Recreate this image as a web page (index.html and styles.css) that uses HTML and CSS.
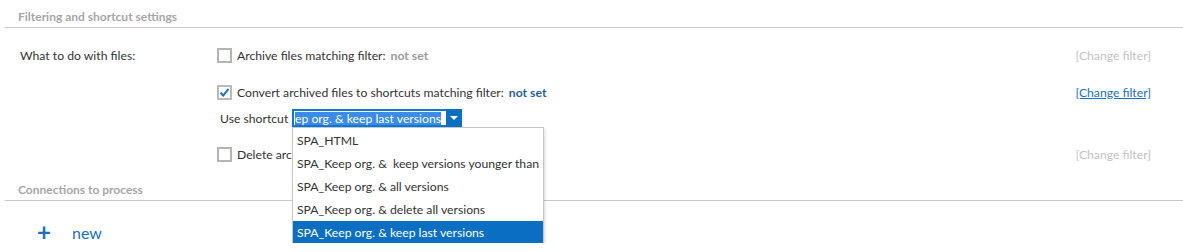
FILE: index.html
```html
<!DOCTYPE html>
<html lang="en">
<head>
    <meta charset="UTF-8">
    <title>Filtering and shortcut settings</title>
    <link rel="stylesheet" href="styles.css">
</head>
<body>
    <div class="section">
        <h3 class="section-title">Filtering and shortcut settings</h3>
        <div class="settings">
            <div class="row">
                <div class="row-label">What to do with files:</div>
                <div class="row-main">
                    <span class="checkbox"></span>
                    <span>Archive files matching filter:</span>
                    <span class="state">not set</span>
                </div>
                <a class="change disabled">[Change filter]</a>
            </div>
            <div class="row row-checked">
                <div class="row-label"></div>
                <div class="row-main">
                    <span class="checkbox checked">
                        <svg width="11" height="11" viewBox="0 0 11 11"><path d="M1.5 5.8 L4.2 8.5 L9.5 1.8" fill="none" stroke="#1b6fc2" stroke-width="2"/></svg>
                    </span>
                    <span>Convert archived files to shortcuts matching filter:</span>
                    <span class="state active">not set</span>
                </div>
                <a class="change" href="#">[Change filter]</a>
            </div>
            <div class="shortcut-row">
                <span class="shortcut-label">Use shortcut</span>
                <div class="combo">
                    <div class="combo-input"><span class="combo-text"><span class="typo">ep</span> org. &amp; keep last versions</span></div>
                    <div class="combo-arrow">
                        <svg width="8" height="4" viewBox="0 0 8 4"><path d="M0 0 H8 L4 4 Z" fill="#fff"/></svg>
                    </div>
                    <ul class="combo-list">
                        <li>SPA_HTML</li>
                        <li>SPA_Keep org. &amp;&nbsp; keep versions younger than</li>
                        <li>SPA_Keep org. &amp; all versions</li>
                        <li>SPA_Keep org. &amp; delete all versions</li>
                        <li class="selected">SPA_Keep org. &amp; keep last versions</li>
                    </ul>
                </div>
            </div>
            <div class="row row-last">
                <div class="row-label"></div>
                <div class="row-main">
                    <span class="checkbox"></span>
                    <span>Delete archived files matching filter:</span>
                    <span class="state">not set</span>
                </div>
                <a class="change disabled">[Change filter]</a>
            </div>
        </div>
    </div>
    <div class="section">
        <h3 class="section-title">Connections to process</h3>
        <div class="new-row">
            <span class="plus">+</span>
            <span class="new-text">new</span>
        </div>
    </div>
</body>
</html>
```

FILE: styles.css
```css
body {
    margin: 0;
    padding: 0;
    font-family: "Lato", "Open Sans", sans-serif;
    font-size: 12.2px;
    color: #333;
    background: #fff;
    overflow: hidden;
}
.section {
    margin-left: 5px;
}
.section-title {
    margin: 0;
    padding: 9px 0 3px 13px;
    font-size: 12px;
    font-weight: bold;
    color: #a6a6a6;
    border-bottom: 1px solid #c8c8c8;
    line-height: 15px;
}
.settings {
    padding-top: 17px;
}
.row {
    display: flex;
    align-items: center;
    height: 20px;
    padding-right: 32px;
    white-space: nowrap;
}
.row-checked {
    margin-top: 17px;
}
.row-last {
    margin-top: 17px;
}
.row-label {
    width: 212px;
    padding-left: 15px;
    box-sizing: border-box;
}
.row-main {
    flex: 1;
    display: flex;
    align-items: center;
}
.checkbox {
    width: 11px;
    height: 11px;
    border: 2px solid #b4b4b4;
    margin-right: 5px;
    display: inline-flex;
    align-items: center;
    justify-content: center;
}
.checkbox.checked {
    border-color: #b9b9b9;
}
.state {
    margin-left: 5px;
    font-weight: bold;
    color: #9a9a9a;
}
.state.active {
    color: #1e5f99;
}
.change {
    color: #c2c2c2;
    text-decoration: none;
}
.change[href] {
    color: #1a6fc4;
    text-decoration: underline;
}
.shortcut-row {
    display: flex;
    align-items: center;
    margin-top: 7px;
    margin-left: 215px;
    height: 18px;
    white-space: nowrap;
}
.shortcut-label {
    width: 72px;
}
.combo {
    position: relative;
    display: flex;
    height: 18px;
}
.combo-input {
    width: 154px;
    background: #fff;
    border: 2px solid #0a78d4;
    border-right: none;
    box-sizing: border-box;
    overflow: hidden;
    white-space: nowrap;
    padding: 0 1px;
}
.combo-text {
    background: #3a8ce8;
    color: #fff;
    line-height: 14px;
    display: inline-block;
}
.typo {
    text-decoration: underline wavy #e22;
}
.combo-arrow {
    width: 16px;
    background: #0a6fc2;
    display: flex;
    align-items: center;
    justify-content: center;
}
.combo-list {
    position: absolute;
    top: 18px;
    left: 0;
    width: 250px;
    margin: 0;
    padding: 1px 0 0;
    list-style: none;
    background: #fff;
    border: 1px solid #c6c6c6;
    box-shadow: 1px 2px 3px rgba(0,0,0,0.15);
    z-index: 2;
}
.combo-list li {
    height: 23px;
    line-height: 23px;
    padding-left: 4px;
    white-space: nowrap;
}
.combo-list li.selected {
    background: #0a6fc2;
    color: #fff;
}
.section + .section .section-title {
    margin-top: 9px;
}
.new-row {
    display: flex;
    align-items: center;
    padding: 20px 0 0 32px;
    color: #1a6fc4;
}
.plus {
    font-size: 24px;
    font-weight: bold;
    width: 35px;
    line-height: 22px;
}
.new-text {
    font-size: 16px;
}
```
